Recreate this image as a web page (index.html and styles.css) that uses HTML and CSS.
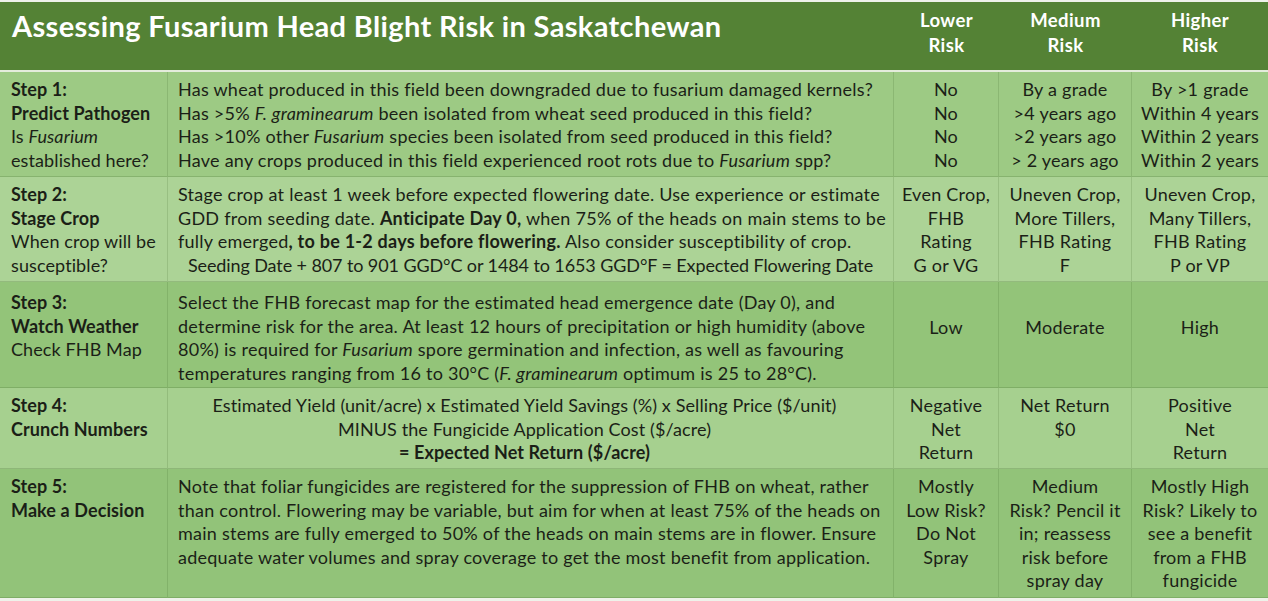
FILE: index.html
```html
<!DOCTYPE html>
<html>
<head>
<meta charset="utf-8">
<link rel="stylesheet" href="styles.css">
</head>
<body>
<div class="sheet">
  <div class="hd title">Assessing Fusarium Head Blight Risk in Saskatchewan</div>
  <div class="hd risk">Lower<br>Risk</div>
  <div class="hd risk">Medium<br>Risk</div>
  <div class="hd risk">Higher<br>Risk</div>
  <div class="gap"></div>

  <div class="c step r1"><b>Step 1:</b><br><b>Predict Pathogen</b><br>Is <i>Fusarium</i><br>established here?</div>
  <div class="c desc r1">Has wheat produced in this field been downgraded due to fusarium damaged kernels?<br>Has &gt;5% <i>F. graminearum</i> been isolated from wheat seed produced in this field?<br>Has &gt;10% other <i>Fusarium</i> species been isolated from seed produced in this field?<br>Have any crops produced in this field experienced root rots due to <i>Fusarium</i> spp?</div>
  <div class="c val r1">No<br>No<br>No<br>No</div>
  <div class="c val r1">By a grade<br>&gt;4 years ago<br>&gt;2 years ago<br>&gt; 2 years ago</div>
  <div class="c val r1 last">By &gt;1 grade<br>Within 4 years<br>Within 2 years<br>Within 2 years</div>

  <div class="c step r2"><b>Step 2:</b><br><b>Stage Crop</b><br>When crop will be<br>susceptible?</div>
  <div class="c desc r2">Stage crop at least 1 week before expected flowering date. Use experience or estimate<br>GDD from seeding date. <b>Anticipate Day 0,</b> when 75% of the heads on main stems to be<br>fully emerged<b>, to be 1-2 days before flowering.</b> Also consider susceptibility of crop.<div class="seed">Seeding Date + 807 to 901 GGD°C or 1484 to 1653 GGD°F = Expected Flowering Date</div></div>
  <div class="c val r2">Even Crop,<br>FHB<br>Rating<br>G or VG</div>
  <div class="c val r2">Uneven Crop,<br>More Tillers,<br>FHB Rating<br>F</div>
  <div class="c val r2 last">Uneven Crop,<br>Many Tillers,<br>FHB Rating<br>P or VP</div>

  <div class="c step r3 pad3"><b>Step 3:</b><br><b>Watch Weather</b><br>Check FHB Map</div>
  <div class="c desc r3 pad3">Select the FHB forecast map for the estimated head emergence date (Day 0), and<br>determine risk for the area. At least 12 hours of precipitation or high humidity (above<br>80%) is required for <i>Fusarium</i> spore germination and infection, as well as favouring<br>temperatures ranging from 16 to 30°C (<i>F. graminearum</i> optimum is 25 to 28°C).</div>
  <div class="c val r3 mid">Low</div>
  <div class="c val r3 mid">Moderate</div>
  <div class="c val r3 mid last">High</div>

  <div class="c step r4"><b>Step 4:</b><br><b>Crunch Numbers</b></div>
  <div class="c desc r4 formula">Estimated Yield (unit/acre) x Estimated Yield Savings (%) x Selling Price ($/unit)<br>MINUS the Fungicide Application Cost ($/acre)<br><b>= Expected Net Return ($/acre)</b></div>
  <div class="c val r4">Negative<br>Net<br>Return</div>
  <div class="c val r4">Net Return<br>$0</div>
  <div class="c val r4 last">Positive<br>Net<br>Return</div>

  <div class="c step r5"><b>Step 5:</b><br><b>Make a Decision</b></div>
  <div class="c desc r5">Note that foliar fungicides are registered for the suppression of FHB on wheat, rather<br>than control. Flowering may be variable, but aim for when at least 75% of the heads on<br>main stems are fully emerged to 50% of the heads on main stems are in flower. Ensure<br>adequate water volumes and spray coverage to get the most benefit from application.</div>
  <div class="c val r5">Mostly<br>Low Risk?<br>Do Not<br>Spray</div>
  <div class="c val r5">Medium<br>Risk? Pencil it<br>in; reassess<br>risk before<br>spray day</div>
  <div class="c val r5 last">Mostly High<br>Risk? Likely to<br>see a benefit<br>from a FHB<br>fungicide</div>
</div>
</body>
</html>
```

FILE: styles.css
```css
html, body {
  margin: 0;
  padding: 0;
  background: #eef2ea;
}
body {
  width: 1268px;
  height: 601px;
  overflow: hidden;
  font-family: Lato, "Open Sans", sans-serif;
  color: #1b1f17;
}
.sheet {
  margin-top: 2px;
  display: grid;
  grid-template-columns: 168px 726px 105px 133px 136px;
  grid-template-rows: 68px 2px 105px 105px 106px 81px 129px;
  background: #eef2ea;
}
.hd {
  background: #548235;
  color: #ffffff;
  font-weight: 700;
}
.title {
  grid-column: 1 / 3;
  font-size: 29px;
  letter-spacing: 0.35px;
  padding: 6px 0 0 12px;
}
.risk {
  text-align: center;
  font-size: 18.5px;
  letter-spacing: 0.4px;
  line-height: 25px;
  padding-top: 6px;
}
.gap {
  grid-column: 1 / 6;
  background: #e4ecdc;
}
.c {
  font-size: 18px;
  letter-spacing: 0.25px;
  line-height: 23.5px;
  padding-top: 6px;
  box-sizing: border-box;
  white-space: nowrap;
  border-right: 1px solid rgba(60, 100, 40, 0.18);
  border-bottom: 1px solid rgba(60, 100, 40, 0.22);
}
.c.last {
  border-right: none;
}
.step {
  padding-left: 11px;
  letter-spacing: 0.1px;
}
.desc {
  padding-left: 10px;
}
.seed {
  text-align: center;
  letter-spacing: -0.1px;
  padding-right: 10px;
}
.formula {
  text-align: center;
  padding-left: 0;
  padding-right: 12px;
  letter-spacing: 0.1px;
}
.val {
  text-align: center;
}
.pad3 {
  padding-top: 9px;
}
.mid {
  padding-top: 34px;
}
.r1 { background: #9dca84; }
.r2 { background: #acd396; }
.r3 { background: #93c479; }
.r4 { background: #a6d08f; }
.r5 { background: #92c379; }
```
